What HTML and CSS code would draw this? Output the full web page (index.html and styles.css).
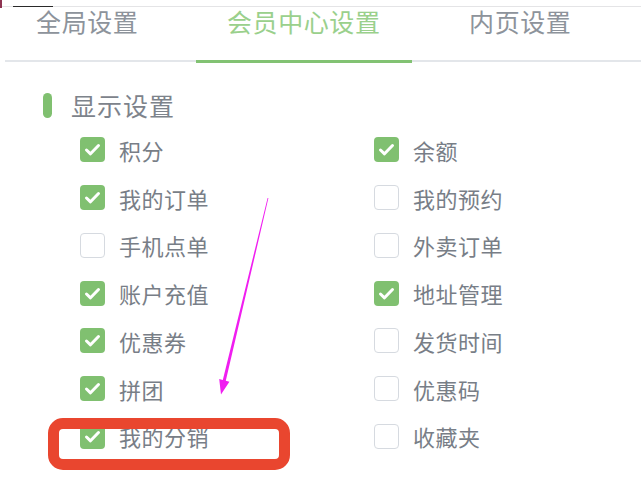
FILE: index.html
```html
<!DOCTYPE html>
<html lang="zh">
<head>
<meta charset="utf-8">
<title>会员中心设置</title>
<link rel="stylesheet" href="styles.css">
</head>
<body>
<div class="page">
  <div class="topbar"><span class="topbar-dark"></span></div>
  <div class="tabbar">
    <div class="tabs">
      <div class="tab">全局设置</div>
      <div class="tab active">会员中心设置</div>
      <div class="tab">内页设置</div>
    </div>
  </div>
  <div class="section">
    <div class="section-title"><span class="pill"></span><span>显示设置</span></div>
    <div class="options">
      <label class="opt"><span class="cb on"><svg viewBox="0 0 25 25"><path d="M6.5 13 L10.5 16.8 L18.5 8.5"/></svg></span><span class="lbl">积分</span></label>
      <label class="opt"><span class="cb on"><svg viewBox="0 0 25 25"><path d="M6.5 13 L10.5 16.8 L18.5 8.5"/></svg></span><span class="lbl">余额</span></label>
      <label class="opt"><span class="cb on"><svg viewBox="0 0 25 25"><path d="M6.5 13 L10.5 16.8 L18.5 8.5"/></svg></span><span class="lbl">我的订单</span></label>
      <label class="opt"><span class="cb"></span><span class="lbl">我的预约</span></label>
      <label class="opt"><span class="cb"></span><span class="lbl">手机点单</span></label>
      <label class="opt"><span class="cb"></span><span class="lbl">外卖订单</span></label>
      <label class="opt"><span class="cb on"><svg viewBox="0 0 25 25"><path d="M6.5 13 L10.5 16.8 L18.5 8.5"/></svg></span><span class="lbl">账户充值</span></label>
      <label class="opt"><span class="cb on"><svg viewBox="0 0 25 25"><path d="M6.5 13 L10.5 16.8 L18.5 8.5"/></svg></span><span class="lbl">地址管理</span></label>
      <label class="opt"><span class="cb on"><svg viewBox="0 0 25 25"><path d="M6.5 13 L10.5 16.8 L18.5 8.5"/></svg></span><span class="lbl">优惠券</span></label>
      <label class="opt"><span class="cb"></span><span class="lbl">发货时间</span></label>
      <label class="opt"><span class="cb on"><svg viewBox="0 0 25 25"><path d="M6.5 13 L10.5 16.8 L18.5 8.5"/></svg></span><span class="lbl">拼团</span></label>
      <label class="opt"><span class="cb"></span><span class="lbl">优惠码</span></label>
      <label class="opt"><span class="cb on"><svg viewBox="0 0 25 25"><path d="M6.5 13 L10.5 16.8 L18.5 8.5"/></svg></span><span class="lbl">我的分销</span></label>
      <label class="opt"><span class="cb"></span><span class="lbl">收藏夹</span></label>
    </div>
  </div>
  <span class="corner-mark"></span>
  <span class="highlight-box"></span>
  <svg class="arrow" viewBox="0 0 641 478" width="641" height="478">
    <polygon points="267.6,197.9 268.4,198.1 225.8,380.8 229.4,381.7 221,394.5 219.2,379.1 222.8,380.0"/>
  </svg>
</div>
</body>
</html>
```

FILE: styles.css
```css
* { box-sizing: border-box; }
html, body { margin: 0; padding: 0; background: #fff; }
body {
  width: 641px;
  height: 478px;
  overflow: hidden;
  font-family: "Noto Sans CJK SC", "Noto Sans", sans-serif;
}
.page { position: relative; width: 641px; height: 478px; overflow: hidden; }

.topbar {
  height: 7px;
  border-bottom: 1px solid #e4e4e6;
  position: relative;
}
.topbar-dark {
  position: absolute;
  left: 13px;
  bottom: -1px;
  width: 40px;
  height: 1px;
  background: #2a2a2a;
}
.corner-mark {
  position: absolute;
  left: 0;
  top: 0;
  width: 2px;
  height: 8px;
  background: #8e3452;
}

.tabbar {
  height: 57px;
  margin-top: -1px;
  background: linear-gradient(#e3e6ea, #e3e6ea) 5px 54px / calc(100% - 5px) 2px no-repeat;
}
.tabs {
  display: flex;
  margin-left: -21px;
}
.tab {
  width: 216.5px;
  flex: none;
  height: 57px;
  padding-top: 0;
  font-size: 25px;
  line-height: 30px;
  letter-spacing: 0.6px;
  text-align: center;
  color: #8d939b;
  border-bottom: 3px solid transparent;
}
.tab.active {
  color: #9ad08c;
  border-bottom-color: #82c273;
}

.section { padding-left: 43px; }
.section-title {
  display: flex;
  align-items: center;
  gap: 19px;
  height: 25px;
  margin-top: 30px;
  font-size: 25px;
  line-height: 25px;
  letter-spacing: 1px;
  color: #7d838b;
}
.pill {
  width: 9px;
  height: 25px;
  border-radius: 5px;
  background: #80c070;
}

.options {
  display: grid;
  grid-template-columns: 294px 1fr;
  grid-auto-rows: 47.75px;
  margin-left: 37px;
  margin-top: 8px;
}
.opt {
  display: flex;
  align-items: center;
  gap: 14px;
}
.cb {
  width: 25px;
  height: 25px;
  border-radius: 4px;
  border: 1.5px solid #d6dae0;
  background: #fff;
  flex: none;
  display: block;
}
.cb.on {
  border: none;
  background: #80c070;
}
.cb svg { display: block; width: 25px; height: 25px; }
.cb svg path {
  fill: none;
  stroke: #fff;
  stroke-width: 3;
  stroke-linecap: round;
  stroke-linejoin: round;
}
.lbl {
  font-size: 22px;
  line-height: 26px;
  letter-spacing: 0.5px;
  color: #787e87;
}

.highlight-box {
  position: absolute;
  left: 48px;
  top: 418px;
  width: 242px;
  height: 52px;
  border: 11px solid #e9462f;
  border-radius: 15px;
}
.arrow {
  position: absolute;
  left: 0;
  top: 0;
}
.arrow polygon { fill: #f01ef0; }
```
